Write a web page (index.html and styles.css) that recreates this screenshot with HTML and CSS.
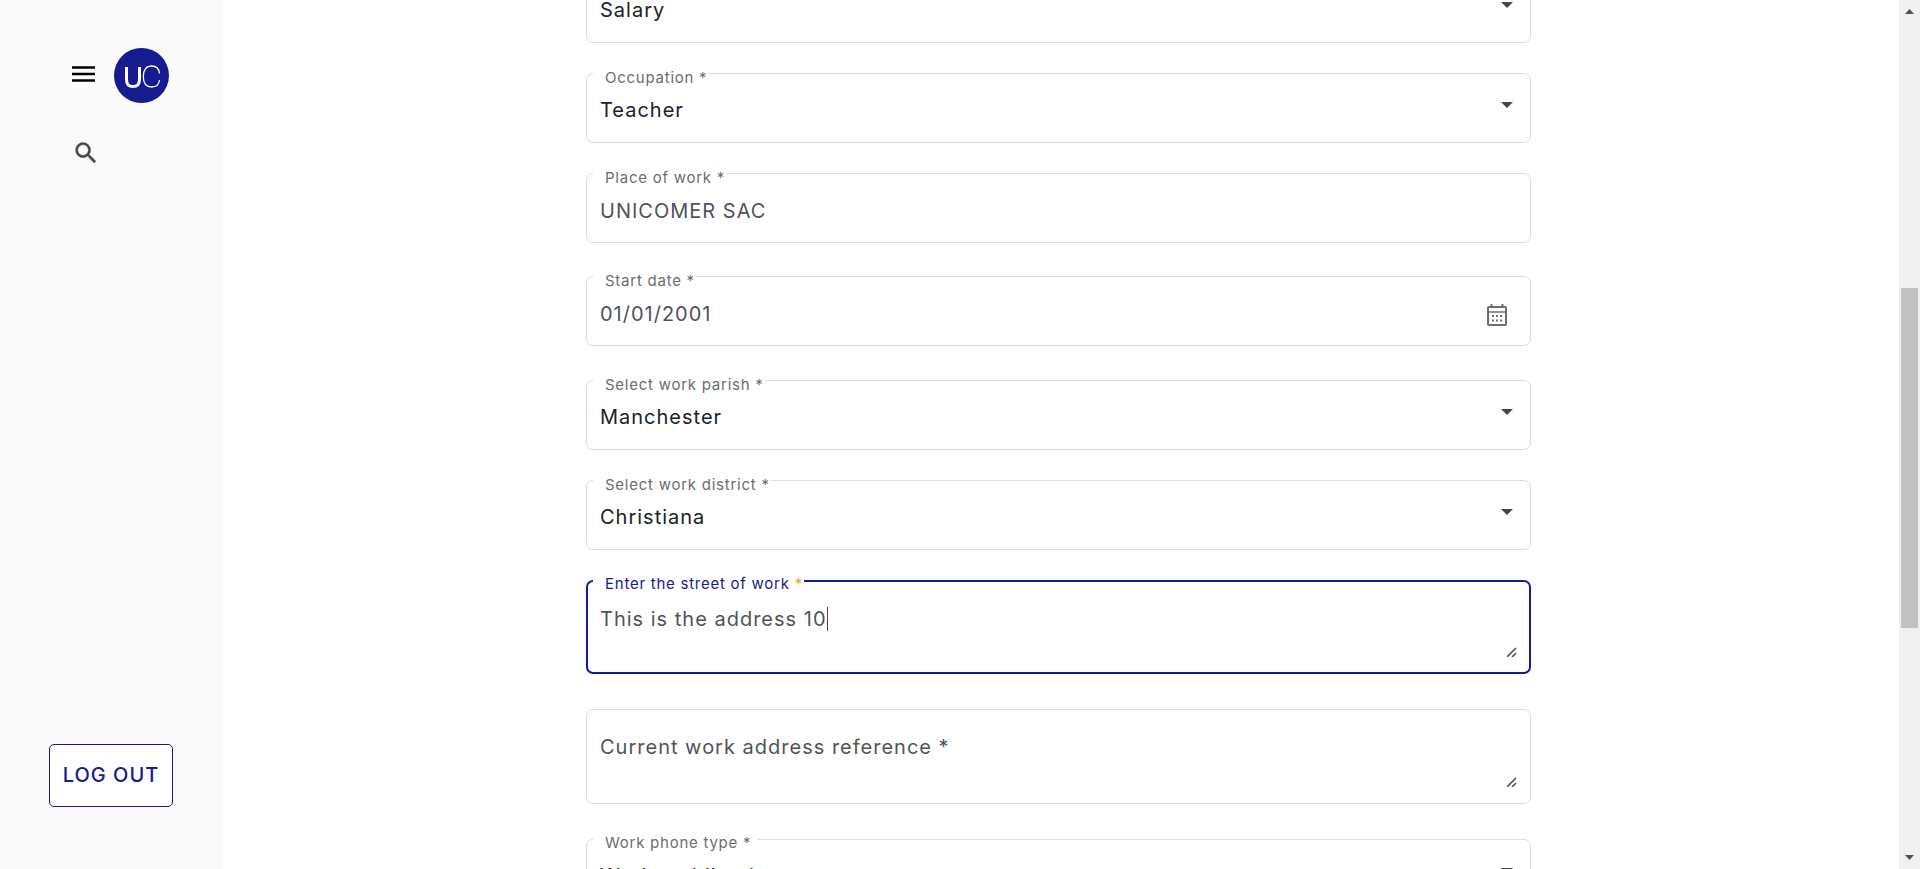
FILE: index.html
```html
<!DOCTYPE html>
<html lang="en">
<head>
<meta charset="utf-8">
<title>Work information</title>
<link rel="stylesheet" href="styles.css">
</head>
<body>
<div class="app">
  <aside class="sidebar">
    <div class="brand">
      <button class="icon-button menu" type="button" aria-label="Menu">
        <svg width="24" height="16" viewBox="0 0 24 16"><path d="M0 1.500h23M0 8h23M0 14.500h23" stroke="#000" stroke-width="2.400"/></svg>
      </button>
      <a class="logo" href="#" aria-label="UC home">
        <svg width="55" height="55" viewBox="0 0 55 55" fill="none" stroke="#fff">
          <circle cx="27.500" cy="27.500" r="27.500" fill="#171b90" stroke="none"/>
          <path d="M12.500 19v12.500q0 7 6.500 7t6.500-7V19" stroke-width="3"/>
          <path d="M45.500 25.500C45 20.500 42 18 37.700 18c-5.200 0-8.400 3.500-8.400 10.500S32.500 39 37.700 39c4.300 0 7.300-2.500 7.800-7" stroke-width="1.300"/>
        </svg>
      </a>
    </div>
    <button class="icon-button search" type="button" aria-label="Search">
      <svg width="28" height="28" viewBox="0 0 24 24" fill="#44474a" stroke="#44474a" stroke-width=".3"><path d="M15.500 14h-.79l-.28-.27A6.471 6.471 0 0 0 16 9.500 6.500 6.500 0 1 0 9.500 16c1.610 0 3.090-.59 4.230-1.570l.27.28v.79l5 4.990L20.490 19l-4.990-5zm-6 0C7.010 14 5 11.990 5 9.500S7.010 5 9.500 5 14 7.010 14 9.500 11.990 14 9.500 14z"/></svg>
    </button>
    <button class="logout" type="button">LOG OUT</button>
  </aside>

  <main class="content">
    <form class="form">
      <div class="field">
        <select class="control select" id="income" aria-label="Income type"><option>Salary</option></select>
      </div>
      <div class="field">
        <label class="label" for="occupation">Occupation *</label>
        <select class="control select" id="occupation"><option>Teacher</option></select>
      </div>
      <div class="field field-text">
        <label class="label" for="place">Place of work *</label>
        <input class="control" id="place" type="text" value="UNICOMER SAC">
      </div>
      <div class="field field-date">
        <label class="label" for="start">Start date *</label>
        <input class="control" id="start" type="text" value="01/01/2001">
        <button class="calendar" type="button" aria-label="Open calendar">
          <svg width="20" height="22" viewBox="0 0 20 22" fill="none" stroke="#6b6d70" stroke-width="2"><rect x="1" y="3" width="18" height="18" rx="1"/><path d="M1 8h18" stroke-width="1.500"/><path d="M4.500 0v3M15.500 0v3"/><path d="M5 12h2M9 12h2M13 12h2M5 16.500h2M9 16.500h2M13 16.500h2"/></svg>
        </button>
      </div>
      <div class="field">
        <label class="label" for="parish">Select work parish *</label>
        <select class="control select" id="parish"><option>Manchester</option></select>
      </div>
      <div class="field">
        <label class="label" for="district">Select work district *</label>
        <select class="control select" id="district"><option>Christiana</option></select>
      </div>
      <div class="field field-area focused">
        <label class="label" for="street">Enter the street of work <span class="required">*</span></label>
        <textarea class="control area" id="street">This is the address 10</textarea>
        <span class="caret" aria-hidden="true"></span>
        <svg class="grip" width="10" height="10" viewBox="0 0 10 10"><path d="M0 10L9 1M5 10l4-4" stroke="#505050" stroke-width="1.600"/></svg>
      </div>
      <div class="field field-area">
        <textarea class="control area" id="reference" aria-label="Current work address reference" placeholder="Current work address reference *"></textarea>
        <svg class="grip" width="10" height="10" viewBox="0 0 10 10"><path d="M0 10L9 1M5 10l4-4" stroke="#505050" stroke-width="1.600"/></svg>
      </div>
      <div class="field field-phone">
        <label class="label" for="phone">Work phone type *</label>
        <select class="control select" id="phone"><option>Work mobile phone</option></select>
      </div>
    </form>
  </main>

  <div class="scrollbar" aria-hidden="true">
    <svg class="arrow" width="9" height="5" viewBox="0 0 9 5"><path d="M0 5h9L4.500 0z" fill="#505050"/></svg>
    <div class="track"><div class="thumb"></div></div>
    <svg class="arrow" width="9" height="5" viewBox="0 0 9 5"><path d="M0 0h9L4.500 5z" fill="#505050"/></svg>
  </div>
</div>
</body>
</html>
```
FILE: styles.css
```css
* {
  box-sizing: border-box;
}

body {
  margin: 0;
  background: #fff;
  color: #202124;
  font-family: Inter, "Liberation Sans", sans-serif;
  font-size: 20px;
  letter-spacing: 0.05em;
}

button,
input,
select,
textarea {
  font: inherit;
  letter-spacing: inherit;
}

.app {
  display: flex;
  height: 100vh;
  overflow: hidden;
}

.sidebar {
  display: flex;
  flex-direction: column;
  align-items: flex-start;
  flex: none;
  width: 223px;
  padding: 48px 50px 62px 49px;
  background: #fafafa;
}

.brand {
  display: flex;
  align-items: center;
  gap: 18px;
  padding-left: 23px;
}

.icon-button {
  display: flex;
  padding: 0;
  border: 0;
  background: none;
}

.menu {
  padding-bottom: 3px;
}

.logo {
  display: flex;
}

.search {
  margin: 36px 0 0 23px;
}

.logout {
  width: 100%;
  height: 63px;
  margin-top: auto;
  padding: 0 0 1px;
  border: 1px solid #171b90;
  border-radius: 5px;
  background: #fff;
  color: #171b90;
  font-weight: 500;
  white-space: nowrap;
}

.content {
  display: flex;
  flex: 1;
  justify-content: center;
  align-items: flex-start;
  padding: 0 24px 0 19px;
}

.form {
  width: 100%;
  max-width: 945px;
  margin-top: -27px;
}

.field {
  position: relative;
  display: flex;
  margin-bottom: 30px;
}

.field-text {
  margin-bottom: 33px;
}

.field-date {
  margin-bottom: 34px;
}

.field-area {
  margin-bottom: 35px;
}

.label {
  position: absolute;
  top: -4px;
  left: 7px;
  padding: 0 1px 0 12px;
  background: #fff;
  color: #6b6d70;
  font-size: 15px;
  line-height: 18px;
  letter-spacing: 0.05em;
}

.control {
  flex: 1;
  min-width: 0;
  height: 70px;
  margin: 0;
  padding: 6px 13px 0;
  border: 1px solid #dcdcdc;
  border-radius: 7px;
  outline: none;
  background: transparent;
  color: #505458;
}

.select {
  padding-top: 4px;
  appearance: none;
  background: url("data:image/svg+xml,%3Csvg xmlns='http://www.w3.org/2000/svg' width='12' height='6'%3E%3Cpath d='M0 0h12L6 6z' fill='%2344474a'/%3E%3C/svg%3E") no-repeat right 17px top 28px;
  color: #202124;
}

.area {
  height: 95px;
  padding: 25px 13px;
  line-height: 24px;
  resize: none;
}

.area::placeholder {
  color: #505458;
  opacity: 1;
}

.focused .control {
  height: 94px;
  padding: 25px 12px 24px;
  border: 2px solid #171b90;
}

.focused .label {
  top: -5px;
  color: #171b90;
}

.required {
  color: #f5a31a;
}

.caret {
  position: absolute;
  top: 27px;
  left: 241px;
  width: 1px;
  height: 24px;
  background: #7a2a60;
}

.field-phone .label {
  top: -5px;
  padding-right: 6px;
}

.calendar {
  position: absolute;
  top: 28px;
  right: 24px;
  display: flex;
  padding: 0;
  border: 0;
  background: none;
}

.grip {
  position: absolute;
  right: 14px;
  bottom: 17px;
}

.scrollbar {
  display: flex;
  flex-direction: column;
  align-items: center;
  flex: none;
  width: 21px;
  padding: 9px 2px;
  background: #f0f0f0;
}

.track {
  flex: 1;
  width: 17px;
}

.thumb {
  height: 40.4%;
  margin-top: 274px;
  background: #c1c1c1;
}
```
